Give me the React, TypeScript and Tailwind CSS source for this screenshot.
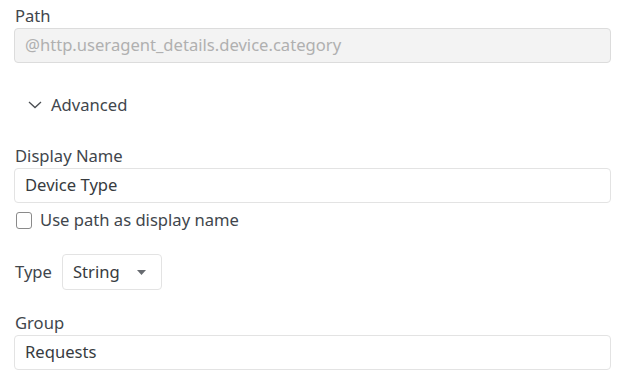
import React from "react";

const font = { fontFamily: '"Noto Sans", "Open Sans", sans-serif' };

const Label = ({ children }: { children: React.ReactNode }) => (
  <div className="text-[16.6px] leading-[22px] text-[#41464c]">{children}</div>
);

const TextInput = ({ value, disabled }: { value: string; disabled?: boolean }) => (
  <div
    className={`mt-[1px] h-[35px] flex items-center px-[10px] rounded-[4px] border text-[16.6px] ${
      disabled
        ? "bg-[#f3f3f3] border-[#dcdcdc] text-[#b0b0b0]"
        : "bg-white border-[#e3e3e3] text-[#373b40]"
    }`}
  >
    {value}
  </div>
);

export default function App() {
  return (
    <div className="w-[628px] h-[384px] bg-white pl-[14px] pr-[17px] pt-[5px]" style={font}>
      {/* Path */}
      <Label>
        <span className="pl-[1px]">Path</span>
      </Label>
      <TextInput value="@http.useragent_details.device.category" disabled />

      {/* Advanced toggle */}
      <div className="mt-[30px] flex items-center h-[24px] pl-[14px] text-[16.6px] text-[#41464c]">
        <svg width="14" height="8" viewBox="0 0 14 8" className="mr-[9px]">
          <path d="M1 1 L7 6.5 L13 1" fill="none" stroke="#4a4e52" strokeWidth="1.3" />
        </svg>
        Advanced
      </div>

      {/* Display name */}
      <div className="mt-[28px]">
        <Label>
          <span className="pl-[1px]">Display Name</span>
        </Label>
        <TextInput value="Device Type" />
      </div>

      <label className="mt-[7px] flex items-center h-[20px] text-[16.6px] text-[#41464c]">
        <span className="ml-[2px] w-[16px] h-[17px] rounded-[3px] border border-[#8a8a8a] bg-white" />
        <span className="ml-[8px]">Use path as display name</span>
      </label>

      {/* Type */}
      <div className="mt-[24px] flex items-center">
        <span className="pl-[1px] text-[16.6px] text-[#41464c]">Type</span>
        <div className="ml-[10px] w-[100px] h-[36px] flex items-center justify-between pl-[10px] pr-[15px] rounded-[4px] border border-[#e3e3e3] text-[16.6px] text-[#373b40]">
          String
          <svg width="9" height="5" viewBox="0 0 9 5">
            <path d="M0 0 L9 0 L4.5 5 Z" fill="#676b70" />
          </svg>
        </div>
      </div>

      {/* Group */}
      <div className="mt-[22px]">
        <Label>
          <span className="pl-[1px]">Group</span>
        </Label>
        <TextInput value="Requests" />
      </div>
    </div>
  );
}
